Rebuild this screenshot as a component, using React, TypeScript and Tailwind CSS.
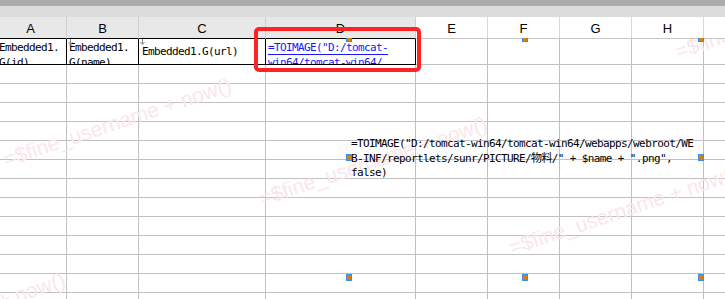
import React from "react";

const COLS = [
  { key: "A", w: "w-[72px]", sel: true },
  { key: "B", w: "w-[72px]", sel: true },
  { key: "C", w: "w-[127px]", sel: true },
  { key: "D", w: "w-[150px]", sel: true },
  { key: "E", w: "w-[72px]", sel: false },
  { key: "F", w: "w-[72px]", sel: false },
  { key: "G", w: "w-[72px]", sel: false },
  { key: "H", w: "w-[72px]", sel: false },
  { key: "I", w: "w-[72px]", sel: false },
];

const MONO =
  "font-['DejaVu_Sans_Mono','Noto_Sans_CJK_SC',monospace] text-[11px] tracking-[-0.62px] text-black";

function Marker() {
  return (
    <svg
      className="absolute left-[1px] top-[0px]"
      width="5"
      height="6"
      viewBox="0 0 5 6"
    >
      <path d="M2.5 0 V5" stroke="#8a8a8a" strokeWidth="1" />
      <path d="M0.5 3 L2.5 5.5 L4.5 3" stroke="#8a8a8a" strokeWidth="1" fill="none" />
    </svg>
  );
}

function Handle({ x, y, top }: { x: number; y: number; top?: boolean }) {
  return (
    <div
      className={
        top
          ? "absolute w-[6px] h-[4px] bg-[#d4820c] border border-t-0 border-[#3c8de8]"
          : "absolute w-[6px] h-[7px] bg-[#d4820c] border border-[#3c8de8]"
      }
      style={{ left: x, top: y }}
    />
  );
}

const WATERMARKS = [
  { x: 6, y: 128 },
  { x: 262, y: 167 },
  { x: 512, y: 216 },
  { x: 678, y: 20 },
  { x: -160, y: 323 },
];

export default function App() {
  return (
    <div className="relative w-[725px] h-[299px] overflow-hidden bg-white flex flex-col">
      <div className="h-[6px] bg-[#ababab] shrink-0" />
      <div className="h-[11px] bg-[#dcdcdc] shrink-0" />
      {/* column header */}
      <div className="flex h-[22px] shrink-0 -ml-[5px]">
        {COLS.map((c) => (
          <div
            key={c.key}
            className={
              c.sel
                ? `${c.w} shrink-0 h-full flex items-center justify-center pt-[2px] bg-[#e8e8e8] border-r border-r-[#cfcfcf] border-b border-b-black font-['Liberation_Sans',Arial,sans-serif] text-[13px] text-black`
                : `${c.w} shrink-0 h-full flex items-center justify-center pt-[2px] bg-white border-r border-r-[#d8d8d8] border-b border-b-[#c6c6c6] font-['Liberation_Sans',Arial,sans-serif] text-[13px] text-black`
            }
          >
            {c.key}
          </div>
        ))}
      </div>

      {/* body */}
      <div className="flex flex-col -ml-[5px]">
        {/* row 1 */}
        <div className={`flex h-[26px] shrink-0 ${MONO} leading-[15px]`}>
          <div className="relative w-[72px] shrink-0 h-full border-r border-b border-black overflow-hidden pl-[4px] pt-[1px] whitespace-pre">
            {"Embedded1.\nG(id)"}
          </div>
          <div className="relative w-[72px] shrink-0 h-full border-r border-b border-black overflow-hidden pl-[2px] pt-[1px] whitespace-pre">
            <Marker />
            {"Embedded1.\nG(name)"}
          </div>
          <div className="relative w-[127px] shrink-0 h-full border-r border-b border-black overflow-hidden pl-[3px] flex items-center whitespace-pre">
            <Marker />
            Embedded1.G(url)
          </div>
          <div className="relative w-[150px] shrink-0 h-full border-r border-b border-black overflow-hidden pl-[2px] pt-[1px] whitespace-pre text-[#1616ff] underline underline-offset-[3px]">
            {'=TOIMAGE("D:/tomcat-\nwin64/tomcat-win64/'}
          </div>
          {COLS.slice(4).map((c) => (
            <div
              key={c.key}
              className={`${c.w} shrink-0 h-full border-r border-b border-[#c0c0c0]`}
            />
          ))}
        </div>
        {Array.from({ length: 13 }).map((_, r) => (
          <div key={r} className="flex h-[19px] shrink-0">
            {COLS.map((c) => (
              <div
                key={c.key}
                className={`${c.w} shrink-0 h-full border-r border-b border-[#c0c0c0]`}
              />
            ))}
          </div>
        ))}
      </div>

      {/* watermark layer */}
      <div className="absolute left-0 right-0 top-[39px] bottom-0 overflow-hidden pointer-events-none">
        {WATERMARKS.map((w, i) => (
          <span
            key={i}
            className="absolute whitespace-pre font-['Liberation_Sans',Arial,sans-serif] text-[21px] leading-[21px] text-[#fae6eb] origin-[0_18px] -rotate-[18.5deg]"
            style={{ left: w.x, top: w.y - 18 }}
          >
            =$fine_username + now()
          </span>
        ))}
      </div>

      {/* floating formula element */}
      <div
        className={`absolute left-[351px] top-[137px] whitespace-pre ${MONO} leading-[14.5px]`}
      >
        {'=TOIMAGE("D:/tomcat-win64/tomcat-win64/webapps/webroot/WE\nB-INF/reportlets/sunr/PICTURE/物料/" + $name + ".png",\nfalse)'}
      </div>

      {/* selection handles */}
      <Handle x={346} y={38} top />
      <Handle x={522} y={38} top />
      <Handle x={698} y={38} top />
      <Handle x={346} y={154} />
      <Handle x={698} y={154} />
      <Handle x={346} y={274} />
      <Handle x={522} y={274} />
      <Handle x={698} y={274} />

      {/* red highlight box */}
      <div className="absolute left-[254px] top-[27px] w-[167px] h-[45px] border-[4px] border-[#ff2323] rounded-[5px] pointer-events-none" />
    </div>
  );
}
